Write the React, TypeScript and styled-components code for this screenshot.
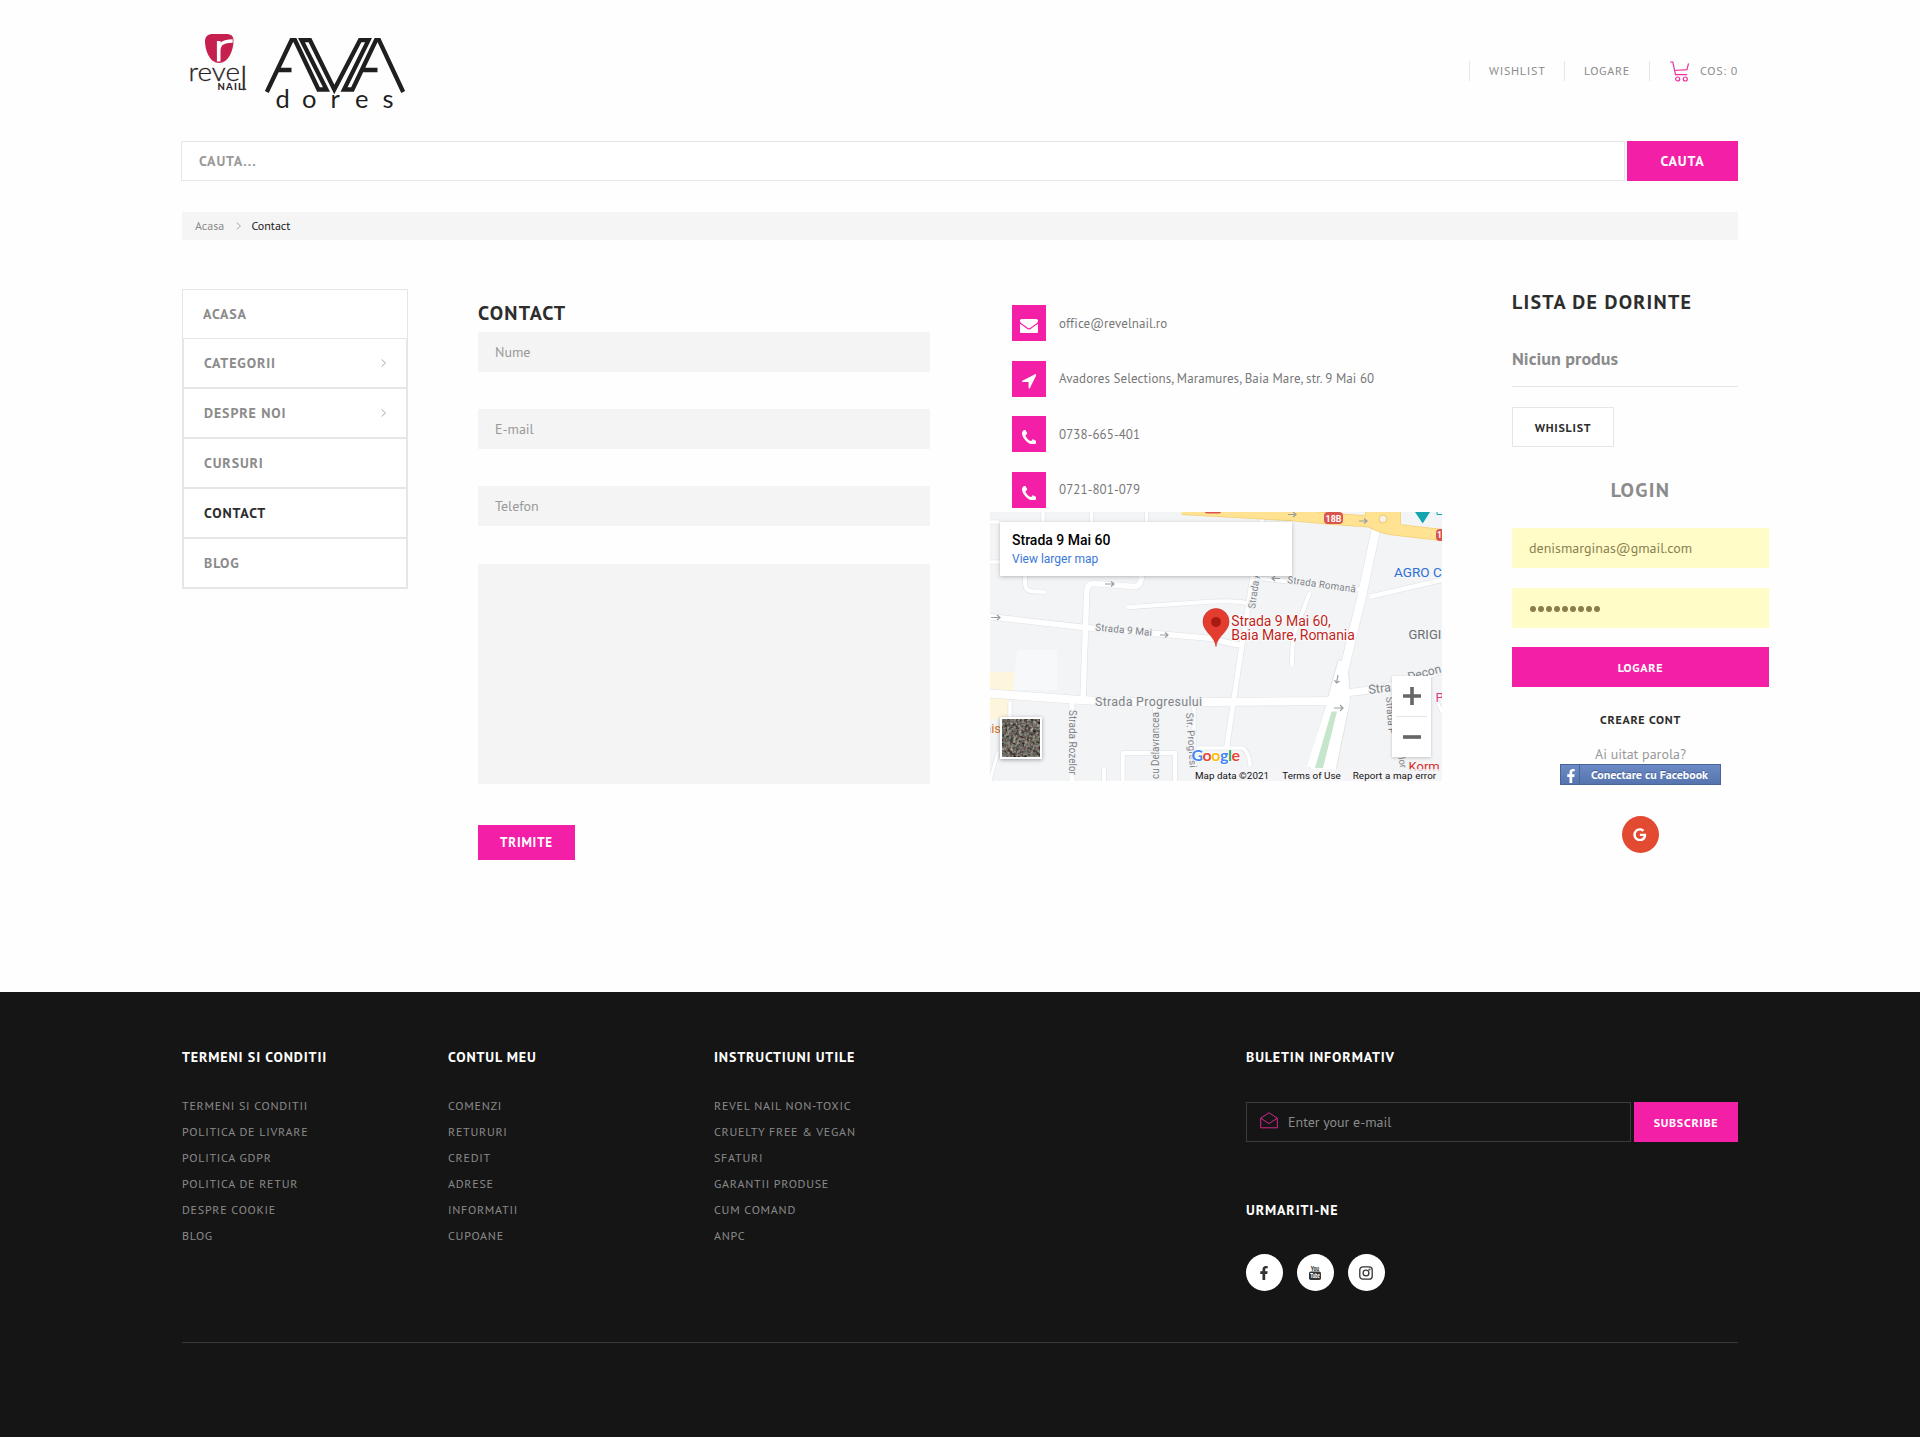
import React from 'react';
import styled, { createGlobalStyle, css } from 'styled-components';
import { FaFacebookF, FaGoogle } from 'react-icons/fa';

const PINK = '#f31fa6';
const LINE = '#e6e6e6';
const GREY = '#8b8b8b';
const DARK = '#2d2d2d';

const GlobalStyle = createGlobalStyle`
  *, *::before, *::after { box-sizing: border-box; }
  body { margin: 0; background: #fefefe; font-family: 'PT Sans', 'Open Sans', sans-serif; color: ${GREY}; }
  input, textarea, button { font-family: inherit; border: 0; border-radius: 0; outline: 0; padding: 0; margin: 0; }
  a { color: inherit; text-decoration: none; }
  ul { list-style: none; margin: 0; padding: 0; }
  h2, h3, h4, p { margin: 0; }
`;

const caps = css`
  letter-spacing: 0.062em;
  white-space: nowrap;
`;

const Page = styled.div`
  display: flex;
  flex-direction: column;
  height: 1437px;
  overflow: hidden;
`;

const Container = styled.div`
  width: 1556px;
  margin: 0 auto;
`;

/* ---------- header ---------- */

const Header = styled.header`
  display: flex;
  justify-content: space-between;
  align-items: center;
  height: 141px;
`;

const LogoLink = styled.a`
  display: block;
  width: 240px;
  height: 101px;
  margin-left: -2px;
`;

const TopNav = styled.nav`
  display: flex;
`;

const TopLink = styled.a<{ $width: number }>`
  display: flex;
  align-items: center;
  width: ${(p) => p.$width}px;
  height: 20px;
  padding-left: 19px;
  border-left: 1px solid ${LINE};
  font-size: 12px;
  ${caps}

  svg { margin: 2px 11px 0 1px; }
`;

const SearchForm = styled.div`
  display: flex;
  gap: 2px;
  height: 40px;
  margin-left: -1px;
`;

const SearchInput = styled.input`
  flex: 1;
  padding-left: 17px;
  border: 1px solid ${LINE};
  background: #fff;
  font-size: 14px;
  font-weight: 700;
  ${caps}

  &::placeholder { color: #999; opacity: 1; }
`;

const PinkButton = styled.button<{ $width?: number; $height?: number; $size?: number }>`
  width: ${(p) => (p.$width ? `${p.$width}px` : '100%')};
  height: ${(p) => p.$height ?? 40}px;
  background: ${PINK};
  color: #fff;
  font-size: ${(p) => p.$size ?? 12}px;
  font-weight: 700;
  ${caps}
`;

const Breadcrumb = styled.nav`
  display: flex;
  align-items: center;
  height: 28px;
  margin-top: 31px;
  padding: 0 0 2px 13px;
  background: #f5f5f5;
  font-size: 12px;

  svg { margin: 1px 10px 0 12px; }
`;

const Crumb = styled.span<{ $current?: boolean }>`
  color: ${(p) => (p.$current ? '#222' : GREY)};
`;

/* ---------- main ---------- */

const Main = styled.main`
  display: flex;
  align-items: flex-start;
  height: 752px;
  padding-top: 49px;
`;

const SideMenu = styled.ul`
  flex: 0 0 226px;
`;

const SideItem = styled.li<{ $first?: boolean; $active?: boolean }>`
  display: flex;
  align-items: center;
  justify-content: space-between;
  height: 50px;
  padding: 0 20px 0 20px;
  border: ${(p) => (p.$first ? 1 : 2)}px solid ${LINE};
  border-top-width: ${(p) => (p.$first ? 1 : 0)}px;
  background: #fff;
  color: ${(p) => (p.$active ? DARK : GREY)};
  font-size: 14px;
  font-weight: 700;
  ${caps}
`;

const FormColumn = styled.section`
  flex: 0 0 452px;
  margin-left: 70px;
  padding-top: 4px;
`;

const Title = styled.h2<{ $height: number; $ls: number }>`
  height: ${(p) => p.$height}px;
  line-height: ${(p) => p.$height + 2}px;
  color: ${DARK};
  font-size: 20px;
  font-weight: 700;
  letter-spacing: ${(p) => p.$ls}px;
  white-space: nowrap;
`;

const Fields = styled.div`
  display: flex;
  flex-direction: column;
  gap: 37.2px;
`;

const Field = styled.input`
  height: 40px;
  padding: 0 17px;
  background: #f4f4f4;
  font-size: 14px;

  &::placeholder { color: #999; opacity: 1; }
`;

const MessageField = styled.textarea`
  display: block;
  height: 220px;
  margin-bottom: 4.4px;
  background: #f4f4f4;
  resize: none;
`;

const ContactColumn = styled.section`
  flex: 0 0 452px;
  margin-left: 60px;
  padding-top: 16px;
`;

const ContactList = styled.ul`
  display: flex;
  flex-direction: column;
  gap: 19.6px;
  padding-left: 22px;
`;

const ContactItem = styled.li`
  display: flex;
  align-items: center;
  gap: 13px;
  height: 36px;
  color: #777;
  font-size: 13px;
  letter-spacing: 0.075px;
  white-space: nowrap;
`;

const IconTile = styled.span`
  display: flex;
  align-items: center;
  justify-content: center;
  width: 34px;
  height: 36px;
  padding-top: 6px;
  background: ${PINK};
`;

const MapFrame = styled.div`
  position: relative;
  width: 452px;
  height: 269px;
  margin-top: 4px;
  overflow: hidden;
  font-family: Roboto, sans-serif;

  > svg { display: block; }
`;

const MapCard = styled.div`
  position: absolute;
  left: 10px;
  top: 10px;
  width: 292px;
  height: 54px;
  padding: 9px 12px;
  background: #fff;
  box-shadow: 0 1px 4px rgba(0, 0, 0, 0.25);
`;

const MapTitle = styled.h4`
  color: #000;
  font-size: 14px;
  font-weight: 500;
  line-height: 18px;
`;

const MapLink = styled.a`
  display: block;
  color: #3b78d8;
  font-size: 12px;
  line-height: 20px;
`;

const Zoom = styled.div`
  position: absolute;
  left: 402px;
  top: 164px;
  width: 39px;
  height: 81px;
  display: flex;
  flex-direction: column;
  background: #fff;
  box-shadow: 0 1px 3px rgba(0, 0, 0, 0.2);
`;

const ZoomButton = styled.span<{ $plus?: boolean }>`
  display: grid;
  place-items: center;
  flex: 1;
  margin: 0 4px;
  border-bottom: ${(p) => (p.$plus ? '1px solid #e6e6e6' : '0')};
`;

const Satellite = styled.div`
  position: absolute;
  left: 10px;
  top: 205px;
  width: 42px;
  height: 42px;
  border: 2px solid #fff;
  background: #6f6c62;
  box-shadow: 0 1px 4px rgba(0, 0, 0, 0.35);
`;

/* ---------- right column ---------- */

const Aside = styled.aside`
  flex: 0 0 257px;
  margin-left: 70px;
`;

const EmptyNote = styled.p`
  width: 226px;
  height: 73px;
  padding-top: 18px;
  border-bottom: 1px solid ${LINE};
  font-size: 18px;
  font-weight: 700;
  line-height: 54px;
`;

const OutlineButton = styled.button`
  display: block;
  width: 102px;
  height: 40px;
  margin-top: 20px;
  padding-top: 1px;
  border: 1px solid ${LINE};
  background: #fff;
  color: ${DARK};
  font-size: 12px;
  font-weight: 700;
  ${caps}
`;

const Login = styled.div`
  display: flex;
  flex-direction: column;
  align-items: center;
`;

const LoginTitle = styled.h3`
  height: 81px;
  padding-top: 5px;
  font-size: 20px;
  font-weight: 700;
  line-height: 77px;
  letter-spacing: 1.3px;
`;

const LoginInput = styled.input`
  width: 257px;
  height: 40px;
  margin-bottom: 20px;
  padding-left: 17px;
  background: #fffcc8;
  color: #8a8050;
  font-size: 14px;
`;

const PasswordBox = styled.div`
  display: flex;
  align-items: center;
  gap: 2px;
  width: 257px;
  height: 40px;
  margin-bottom: 19px;
  padding: 2px 0 0 18px;
  background: #fffcc8;
`;

const Dot = styled.span`
  width: 6px;
  height: 6px;
  border-radius: 50%;
  background: #8a7d4c;
`;

const CreateLink = styled.a`
  margin-top: 20px;
  color: ${DARK};
  font-size: 12px;
  font-weight: 700;
  line-height: 25px;
  ${caps}
`;

const ForgotLink = styled.a`
  margin-top: 12.5px;
  color: #999;
  font-size: 14px;
  line-height: 19.5px;
`;

const FacebookButton = styled.a`
  display: flex;
  align-items: center;
  width: 161px;
  height: 21px;
  border: 1px solid #4a6496;
  background: linear-gradient(#6c8bc4, #5573ae);
  color: #fff;
  font-size: 12px;
  font-weight: 700;
  white-space: nowrap;
  text-shadow: 0 -1px 0 rgba(40, 60, 110, 0.5);
`;

const FacebookMark = styled.span`
  display: grid;
  place-items: center end;
  width: 19px;
  height: 19px;
  margin-right: 11px;
  padding: 2px 1px 0 0;
  border-right: 1px solid #48649c;
`;

const GoogleButton = styled.a`
  display: grid;
  place-items: center;
  width: 37px;
  height: 37px;
  margin-top: 31px;
  padding-right: 1px;
  border-radius: 50%;
  background: #e24a31;
  color: #fff;
`;

/* ---------- footer ---------- */

const Footer = styled.footer`
  flex: 1;
  padding-top: 55px;
  background: #151515;
`;

const FooterGrid = styled.div`
  display: grid;
  grid-template-columns: 266px 266px 532px 492px;
  height: 296px;
  border-bottom: 1px solid #3a3a3a;
`;

const FooterTitle = styled.h4`
  color: #fff;
  font-size: 14px;
  font-weight: 700;
  line-height: 20px;
  ${caps}
`;

const FooterLinks = styled.ul`
  margin-top: 25.5px;
`;

const FooterLink = styled.li`
  height: 26px;
  color: #8a8a8a;
  font-size: 12px;
  line-height: 26px;
  ${caps}
`;

const Newsletter = styled.div`
  display: flex;
  gap: 3px;
  margin: 35px 0 58px;
`;

const NewsletterBox = styled.label`
  display: flex;
  align-items: center;
  width: 385px;
  height: 40px;
  padding-left: 13px;
  border: 1px solid #3c3c3c;

  svg { margin: -4px 10px 0 0; }
`;

const NewsletterInput = styled.input`
  flex: 1;
  background: transparent;
  font-size: 14px;

  &::placeholder { color: #8a8a8a; opacity: 1; }
`;

const Socials = styled.div`
  display: flex;
  gap: 14px;
  margin-top: 34px;
`;

const Social = styled.a`
  display: grid;
  place-items: center;
  width: 37px;
  height: 37px;
  padding-right: 1px;
  border-radius: 50%;
  background: #fff;
  color: #333;
`;

/* ---------- drawings ---------- */

const Logo = () => (
  <svg width="240" height="101" viewBox="10 0 240 101">
    <path d="M35 21c0-4.500 3-7 8-7h13c5 0 7.500 2 7.500 6.500C63.500 31 58 43 49 43S35 31 35 21Z" fill="#c6204f" />
    <path d="M48.700 41.500V21M48.700 31c0-7 4-10 14-10" fill="none" stroke="#fff" strokeWidth="3.600" />
    <g fontFamily="Lato, sans-serif" fill="#2a2526">
      <text x="18.500" y="61" fontSize="24.500" fontWeight="300" stroke="#2a2526" strokeWidth=".3">
        <tspan textLength="51.500" lengthAdjust="spacingAndGlyphs">reve</tspan><tspan x="70" y="69.500" fontSize="34">l</tspan>
      </text>
      <text x="47.500" y="70" fontSize="9.500" fontWeight="900" textLength="29" lengthAdjust="spacing">NAIL.</text>
    </g>
    <g fontFamily="Lato, sans-serif" fontSize="25.500" fill="#1f1f1f">
      <text x="105.500" y="88">d</text>
      <text x="132" y="88">o</text>
      <text x="160.500" y="88">r</text>
      <text x="185" y="88">e</text>
      <text x="212.500" y="88">s</text>
    </g>
    <path
      d="M96.800 72 121.500 20.200H125L148.500 69.500H156.500L131.500 20.200H140L164.300 69.500 190 20.200H198.500L174 69.500H182.500L206 20.200H209L233.200 72M106 50H121.500M193.500 50H207.500"
      fill="none" stroke="#1f1f1f" strokeWidth="4.300"
    />
  </svg>
);

const Cart = () => (
  <svg width="19" height="21" viewBox="0 0 19 21" fill="none" stroke="#ee2f9d" strokeWidth="1.200">
    <path d="M0 1h2.800l2.700 12.700h11.700M4.300 9.500l12.700-.8L18.500 2.500" />
    <circle cx="7.700" cy="18" r="2" /><circle cx="15.300" cy="18" r="2" />
  </svg>
);

const Chevron = () => (
  <svg width="5.200" height="8" viewBox="0 0 5.200 8" fill="none" stroke="#aaa" strokeWidth="1">
    <path d="M.6.500 4.500 4 .6 7.500" />
  </svg>
);

const Envelope = () => (
  <svg width="18" height="14.500" viewBox="0 256 1792 1408" preserveAspectRatio="none" fill="#fff">
    <path d="M1792 710v794q0 66-47 113t-113 47h-1472q-66 0-113-47t-47-113v-794q44 49 101 87 362 246 497 345 57 42 92.500 65.500t94.500 48 110 24.500h2q51 0 110-24.500t94.500-48 92.500-65.500q170-123 498-345 57-39 100-87zm0-294q0 79-49 151t-122 123q-376 261-468 325-10 7-42.500 31t-54 38.500-52 32.500-57.500 27-50 9h-2q-23 0-50-9t-57.500-27-52-32.500-54-38.500-42.500-31q-91-64-262-182.500t-205-142.500q-62-42-117-115.500t-55-136.500q0-78 41.500-130t118.500-52h1472q65 0 112.500 47t47.500 113z" />
  </svg>
);

const Arrow = () => (
  <svg width="14.500" height="14.500" viewBox="0 256 1408 1408" fill="#fff">
    <path d="M1401 349l-640 1280q-17 35-57 35-5 0-15-2-22-5-35.500-22.500t-13.500-39.500v-576h-576q-22 0-39.500-13.500t-22.500-35.500 4-42 29-30l1280-640q13-7 29-7 27 0 45 19 15 14 18.500 34.500t-6.500 39.500z" />
  </svg>
);

const Phone = () => (
  <svg width="14.500" height="14.500" viewBox="0 128 1408 1408" fill="#fff">
    <path d="M1408 1240q0 27-10 70.500t-21 68.500q-21 50-122 106-94 51-186 51-27 0-53-3.500t-57.500-12.500-47-14.500-55.500-20.500-49-18q-98-35-175-83-127-79-264-216t-216-264q-48-77-83-175-3-9-18-49t-20.500-55.500-14.500-47-12.500-57.500-3.500-53q0-92 51-186 56-101 106-122 25-11 68.500-21t70.500-10q14 0 21 3 18 6 53 76 11 19 30 54t35 63.500 31 53.500q3 4 17.500 25t21.500 35.500 7 28.500q0 20-28.500 50t-62 55-62 53-28.500 46q0 9 5 22.500t8.500 20.500 14 24 11.500 19q76 137 174 235t235 174q2 1 19 11.500t24 14 20.500 8.500 22.500 5q18 0 46-28.500t53-62 55-62 50-28.500q14 0 28.500 7t35.500 21.500 25 17.500q25 15 53.500 31t63.500 35 54 30q70 35 76 53 3 7 3 21z" />
  </svg>
);

const OpenMail = () => (
  <svg width="18" height="17" viewBox="0 0 18 17" fill="none" stroke="#d3268f" strokeWidth="1">
    <path d="M.7 6.200 9 .7l8.300 5.500v9.600H.7Z M.7 6.200 9 11.600l8.300-5.400" />
  </svg>
);

const YouTubeMark = () => (
  <svg width="14" height="17" viewBox="0 0 14 17">
    <rect x="1" y="7.500" width="12" height="8.500" rx="1.800" fill="#333" />
    <g fontFamily="'PT Sans', 'Open Sans', sans-serif" fontWeight="700" textAnchor="middle">
      <text x="7" y="6.800" fontSize="8" fill="#333" textLength="8.500" lengthAdjust="spacingAndGlyphs">You</text>
      <text x="7" y="14.300" fontSize="7" fill="#fff" textLength="9.500" lengthAdjust="spacingAndGlyphs">Tube</text>
    </g>
  </svg>
);

const InstagramMark = () => (
  <svg width="14" height="14" viewBox="0 0 14 14" fill="none" stroke="#333" strokeWidth="1.300">
    <rect x=".8" y=".8" width="12.400" height="12.400" rx="3" />
    <circle cx="7" cy="7" r="2.900" /><circle cx="10.500" cy="3.500" r=".4" />
  </svg>
);

type Road = { d: string; w: number };
const roads: Road[] = [
  { d: 'M0 10H9M53 0V12M101.500 0V12M156.500 0V12M0 50H12', w: 3.500 },
  { d: 'M35 62V71Q35 79 42 79.300L55 80', w: 4 },
  { d: 'M93 188 96.700 80Q97 71.500 104 71.500L144 74.500Q151 74.500 151.500 64', w: 5.500 },
  { d: 'M136.700 95.300 215 90Q245 88 256 91', w: 4 },
  { d: 'M0 104.700 96.700 115.700 223 126.500Q235 131 251 133', w: 5.500 },
  { d: 'M273 0 263 64 251.700 134.700 236.700 235', w: 5 },
  { d: 'M266 66 373 78', w: 4 },
  { d: 'M320 80 303 125 301.700 154', w: 4 },
  { d: 'M380 84.700 452 68', w: 4.500 },
  { d: 'M386.700 14 371.700 84.700 356 150 347 190', w: 8.500 },
  { d: 'M355 181Q410 176 452 158', w: 7 },
  { d: 'M0 181.500 90 188Q150 191.500 223 190L350 189', w: 8 },
  { d: 'M82 190V269', w: 5 },
  { d: 'M132.700 269V241H185V269M114 269V256M165 192V241', w: 4 },
  { d: 'M204 192V234M208 236 253 236Q260 242 260 254M20 190V206', w: 3.500 },
  { d: 'M0 269 8 240M445 185 452 200', w: 3 },
];

const CityMap = () => (
  <svg width="452" height="269" viewBox="0 0 452 269" fontFamily="Roboto, sans-serif">
    <rect width="452" height="269" fill="#f2f4f6" />
    <path d="M0 160H25V187H0ZM0 187H19V207H0Z" fill="#fdf6dc" />
    <path d="M27 138H67V178H23Z" fill="#f7f8fa" />
    <g fill="none" strokeLinejoin="round">
      {roads.map((r) => <path key={r.d} d={r.d} stroke="#e0e3e7" strokeWidth={r.w + 1.2} />)}
      <path d="M348 148 319 254 326 269H344L360 189 358 148Z" fill="#fff" stroke="#e0e3e7" />
      {roads.map((r) => <path key={r.d} d={r.d} stroke="#fff" strokeWidth={r.w} />)}
    </g>
    <path d="M349 152 317 255H345L360 189 357 152Z" fill="#fff" />
    <path d="M341.500 199.500H347L333 256H325Z" fill="#c5e6cb" />
    <g fill="none" strokeLinejoin="round">
      <path d="M192-3 300 3 343 7 380 9.500Q393 17 408 18L452 23M381 0V9M405-2V14" stroke="#f3cf74" strokeWidth="12" />
      <path d="M192-3 300 3 343 7 380 9.500Q393 17 408 18L452 23M381 0V9M405-2V14" stroke="#ffe292" strokeWidth="10.500" />
    </g>
    <circle cx="393" cy="7" r="9" fill="#ffe292" />
    <circle cx="393" cy="7" r="4" fill="#f6f1e4" stroke="#eec867" />
    <g fill="#d9534f">
      <rect x="334" y="0" width="19" height="12" rx="4" /><rect x="446" y="17" width="12" height="12" rx="4" />
      <rect x="214" y="-8" width="18" height="9.500" rx="4" />
    </g>
    <g fill="#fff" fontSize="8.500" fontWeight="700">
      <text x="335.500" y="9.800" textLength="16" lengthAdjust="spacingAndGlyphs">18B</text><text x="447" y="26">1</text>
    </g>
    <path d="M425 0H440L432.700 11.500Z" fill="#12a5b0" />
    <path d="M447 0V2.500H452" stroke="#12a5b0" fill="none" />
    <g fill="none" stroke="#9a9da2" strokeWidth="1.200">
      <path d="M1 105.500h9m-3-2.500 3 2.500-3 2.500M115 72h9m-3-2.500 3 2.500-3 2.500M170 123h8m-3-2.500 3 2.500-3 2.500M290 66.500h-8m3-2.500-3 2.500 3 2.500M298 2.500h8m-3-2.500 3 2.500-3 2.500M369 9h8m-3-2.500 3 2.500-3 2.500M348 163l-1.500 8m-2-3 2 3 3-2M344 196h9m-3-3 3 3-3 3" />
    </g>
    <g fill="#808286" fontSize="10" stroke="#f2f4f6" strokeWidth="2.500" paintOrder="stroke">
      <text transform="translate(105 118.500) rotate(5.500)" textLength="57">Strada 9 Mai</text>
      <text x="105" y="194" fontSize="12.500" textLength="107">Strada Progresului</text>
      <text transform="translate(297 71) rotate(8)" textLength="69">Strada Romană</text>
      <text transform="translate(265 97) rotate(-82)" textLength="37">Strada A</text>
      <text transform="translate(79 198) rotate(90)" textLength="65">Strada Rozelor</text>
      <text transform="translate(169 267) rotate(-90)" textLength="67">cu Delavrancea</text>
      <text transform="translate(196 201) rotate(86)" textLength="55">Str. Progresi</text>
      <text transform="translate(396 185) rotate(86)">Strada P</text>
      <text transform="translate(407 238) rotate(80)" fontSize="9.500">irilor</text>
      <text transform="translate(379 182) rotate(-7)" fontSize="12.500">Stra</text>
      <text transform="translate(419 169) rotate(-15)" fontSize="12">Decon</text>
    </g>
    <text x="418.500" y="127" fontSize="13" fill="#6c6e72">GRIGI</text>
    <text x="404" y="65" fontSize="13.500" fill="#2f6fd6">AGRO C</text>
    <text x="445.500" y="190" fontSize="13" fill="#e0348b">P</text>
    <text x="418.500" y="259" fontSize="13" fill="#d9302c">Korm</text>
    <text x="-6" y="221" fontSize="13" fill="#d8741c">nis</text>
    <path d="M226 134.500C225 124 213 120 213 109.500a13 13 0 0 1 26 0C239 120 227 124 226 134.500Z" fill="#e53c30" stroke="#c5281e" strokeWidth=".6" />
    <circle cx="226" cy="110" r="5" fill="#a91a12" />
    <g fill="#bf1f1c" fontSize="14" stroke="#fff" strokeWidth="1.500" paintOrder="stroke">
      <text x="241.300" y="114" textLength="99.500">Strada 9 Mai 60,</text>
      <text x="241.300" y="128" textLength="123.500">Baia Mare, Romania</text>
    </g>
    <text x="201.500" y="248.500" fontFamily="Lato, sans-serif" fontWeight="700" fontSize="16" textLength="48.500" stroke="#fff" strokeWidth="1.500" paintOrder="stroke">
      <tspan fill="#4285f4">G</tspan><tspan fill="#ea4335">o</tspan><tspan fill="#fbbc05">o</tspan><tspan fill="#4285f4">g</tspan><tspan fill="#34a853">l</tspan><tspan fill="#ea4335">e</tspan>
    </text>
    <rect x="200" y="257" width="252" height="12" fill="#f5f6f7" fillOpacity=".75" />
    <g fill="#111" fontSize="9.800">
      <text x="205" y="266.500" textLength="74">Map data ©2021</text>
      <text x="292.300" y="266.500" textLength="58.500">Terms of Use</text>
      <text x="362.700" y="266.500" textLength="83.500">Report a map error</text>
    </g>
  </svg>
);

const Aerial = () => (
  <svg width="38" height="38">
    <filter id="grain" x="0" y="0" width="1" height="1" colorInterpolationFilters="sRGB">
      <feTurbulence type="fractalNoise" baseFrequency="0.35" numOctaves="3" seed="4" />
      <feColorMatrix values="0.7 0.5 0 0 -0.18  0.5 0.7 0 0 -0.2  0.5 0.6 0.1 0 -0.23  0 0 0 0 1" />
    </filter>
    <rect width="38" height="38" filter="url(#grain)" />
  </svg>
);

/* ---------- content ---------- */

const menu = [
  { label: 'ACASA' },
  { label: 'CATEGORII', more: true },
  { label: 'DESPRE NOI', more: true },
  { label: 'CURSURI' },
  { label: 'CONTACT', active: true },
  { label: 'BLOG' },
];

const contacts = [
  { icon: <Envelope />, text: 'office@revelnail.ro' },
  { icon: <Arrow />, text: 'Avadores Selections, Maramures, Baia Mare, str. 9 Mai 60' },
  { icon: <Phone />, text: '0738-665-401' },
  { icon: <Phone />, text: '0721-801-079' },
];

const footerColumns = [
  {
    title: 'TERMENI SI CONDITII',
    links: ['TERMENI SI CONDITII', 'POLITICA DE LIVRARE', 'POLITICA GDPR', 'POLITICA DE RETUR', 'DESPRE COOKIE', 'BLOG'],
  },
  {
    title: 'CONTUL MEU',
    links: ['COMENZI', 'RETURURI', 'CREDIT', 'ADRESE', 'INFORMATII', 'CUPOANE'],
  },
  {
    title: 'INSTRUCTIUNI UTILE',
    links: ['REVEL NAIL NON-TOXIC', 'CRUELTY FREE & VEGAN', 'SFATURI', 'GARANTII PRODUSE', 'CUM COMAND', 'ANPC'],
  },
];

export default function App() {
  return (
    <Page>
      <GlobalStyle />
      <Container>
        <Header>
          <LogoLink href="#"><Logo /></LogoLink>
          <TopNav>
            <TopLink href="#" $width={95}>WISHLIST</TopLink>
            <TopLink href="#" $width={85}>LOGARE</TopLink>
            <TopLink href="#" $width={89}><Cart />COS: 0</TopLink>
          </TopNav>
        </Header>
        <SearchForm>
          <SearchInput placeholder="CAUTA..." />
          <PinkButton $width={111} $size={14}>CAUTA</PinkButton>
        </SearchForm>
        <Breadcrumb>
          <Crumb>Acasa</Crumb>
          <Chevron />
          <Crumb $current>Contact</Crumb>
        </Breadcrumb>

        <Main>
          <SideMenu>
            {menu.map((m, i) => (
              <SideItem key={m.label} $first={i === 0} $active={m.active}>
                {m.label}
                {m.more && <Chevron />}
              </SideItem>
            ))}
          </SideMenu>

          <FormColumn>
            <Title $height={39} $ls={1.2}>CONTACT</Title>
            <Fields>
              <Field placeholder="Nume" />
              <Field placeholder="E-mail" />
              <Field placeholder="Telefon" />
              <MessageField />
              <PinkButton $width={97} $height={35} $size={13}>TRIMITE</PinkButton>
            </Fields>
          </FormColumn>

          <ContactColumn>
            <ContactList>
              {contacts.map((c) => (
                <ContactItem key={c.text}>
                  <IconTile>{c.icon}</IconTile>
                  {c.text}
                </ContactItem>
              ))}
            </ContactList>
            <MapFrame>
              <CityMap />
              <MapCard>
                <MapTitle>Strada 9 Mai 60</MapTitle>
                <MapLink href="#">View larger map</MapLink>
              </MapCard>
              <Satellite><Aerial /></Satellite>
              <Zoom>
                <ZoomButton $plus>
                  <svg width="18" height="18" stroke="#666" strokeWidth="3.600"><path d="M0 9h18M9 0v18" /></svg>
                </ZoomButton>
                <ZoomButton>
                  <svg width="18" height="4" stroke="#666" strokeWidth="3.600"><path d="M0 2h18" /></svg>
                </ZoomButton>
              </Zoom>
            </MapFrame>
          </ContactColumn>

          <Aside>
            <Title $height={25} $ls={1.26}>LISTA DE DORINTE</Title>
            <EmptyNote>Niciun produs</EmptyNote>
            <OutlineButton>WHISLIST</OutlineButton>
            <Login>
              <LoginTitle>LOGIN</LoginTitle>
              <LoginInput defaultValue="denismarginas@gmail.com" />
              <PasswordBox>
                {Array.from({ length: 9 }, (_, i) => <Dot key={i} />)}
              </PasswordBox>
              <PinkButton>LOGARE</PinkButton>
              <CreateLink href="#">CREARE CONT</CreateLink>
              <ForgotLink href="#">Ai uitat parola?</ForgotLink>
              <FacebookButton href="#">
                <FacebookMark><FaFacebookF size={14} /></FacebookMark>
                Conectare cu Facebook
              </FacebookButton>
              <GoogleButton href="#"><FaGoogle size={13.500} /></GoogleButton>
            </Login>
          </Aside>
        </Main>
      </Container>

      <Footer>
        <Container>
          <FooterGrid>
            {footerColumns.map((c) => (
              <div key={c.title}>
                <FooterTitle>{c.title}</FooterTitle>
                <FooterLinks>
                  {c.links.map((label) => <FooterLink key={label}>{label}</FooterLink>)}
                </FooterLinks>
              </div>
            ))}
            <div>
              <FooterTitle>BULETIN INFORMATIV</FooterTitle>
              <Newsletter>
                <NewsletterBox>
                  <OpenMail />
                  <NewsletterInput placeholder="Enter your e-mail" />
                </NewsletterBox>
                <PinkButton $width={104}>SUBSCRIBE</PinkButton>
              </Newsletter>
              <FooterTitle>URMARITI-NE</FooterTitle>
              <Socials>
                <Social href="#"><FaFacebookF size={14} /></Social>
                <Social href="#"><YouTubeMark /></Social>
                <Social href="#"><InstagramMark /></Social>
              </Socials>
            </div>
          </FooterGrid>
        </Container>
      </Footer>
    </Page>
  );
}
